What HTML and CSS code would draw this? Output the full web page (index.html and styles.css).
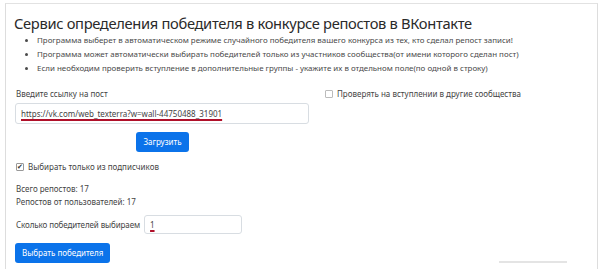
FILE: index.html
```html
<!DOCTYPE html>
<html>
<head>
<meta charset="utf-8">
<link rel="stylesheet" href="styles.css">
</head>
<body>
<div class="frame">
  <h1 class="title">Сервис определения победителя в конкурсе репостов в ВКонтакте</h1>
  <ul class="notes">
    <li>Программа выберет в автоматическом режиме случайного победителя вашего конкурса из тех, кто сделал репост записи!</li>
    <li>Программа может автоматически выбирать победителей только из участников сообщества(от имени которого сделан пост)</li>
    <li>Если необходим проверить вступление в дополнительные группы - укажите их в отдельном поле(по одной в строку)</li>
  </ul>
  <div class="row">
    <div class="col-left">
      <div class="label">Введите ссылку на пост</div>
      <div class="input wide"><span class="u">https://vk.com/web_texterra?w=wall-44750488_31901</span></div>
      <div class="center"><span class="btn">Загрузить</span></div>
    </div>
    <div class="col-right">
      <label class="check"><span class="box"></span>Проверять на вступлении в другие сообщества</label>
    </div>
  </div>
  <label class="check subs"><span class="box checked">✔</span>Выбирать только из подписчиков</label>
  <div class="stats">
    <div>Всего репостов: 17</div>
    <div>Репостов от пользователей: 17</div>
  </div>
  <div class="count">
    <span>Сколько победителей выбираем</span>
    <div class="input small"><span class="u">1</span></div>
  </div>
  <div class="bottom">
    <span class="btn">Выбрать победителя</span>
    <span class="line"></span>
  </div>
</div>
</body>
</html>
```
FILE: styles.css
```css
html, body {
  margin: 0;
  padding: 0;
  background: #fff;
}
body {
  font-family: "Noto Sans", "Open Sans", sans-serif;
  color: #444;
  font-size: 8px;
  padding: 3px 7px 0 5px;
  height: 269px;
  box-sizing: border-box;
  overflow: hidden;
}
.frame {
  border-left: 1px solid #ddd;
  border-top: 1px solid #e2e2e2;
  border-right: 1px solid #ddd;
  height: 270px;
  padding: 0 0 0 9px;
  box-sizing: border-box;
}
.title {
  font-weight: 400;
  font-size: 14.7px;
  color: #2a2a2a;
  margin: 9px 0 0 -1px;
  line-height: 20px;
  letter-spacing: -0.32px;
}
.notes {
  margin: 0;
  padding-left: 22px;
  font-size: 7.95px;
  line-height: 14px;
  color: #4a4a4a;
}
.row {
  display: flex;
  margin-top: 13px;
}
.col-left {
  width: 294px;
}
.col-right {
  padding-left: 16px;
}
.label {
  line-height: 12px;
  margin-left: 1px;
}
.input {
  border: 1px solid #d8dde2;
  border-radius: 3px;
  box-sizing: border-box;
  background: #fff;
  font-size: 8px;
  color: #444;
  display: flex;
  align-items: center;
}
.wide {
  width: 294px;
  height: 21px;
  margin-top: 3px;
  padding-left: 5px;
}
.u {
  text-decoration: underline;
  text-decoration-color: #b0102a;
  text-decoration-thickness: 2px;
  text-underline-offset: 2px;
}
.center {
  display: flex;
  justify-content: center;
  margin-top: 8px;
  padding-left: 1px;
}
.btn {
  display: inline-block;
  background: #0b73ea;
  color: #fff;
  border-radius: 3px;
  font-size: 8px;
  line-height: 20px;
  padding: 0 7px;
}
.check {
  display: flex;
  align-items: center;
  line-height: 12px;
}
.box {
  width: 6px;
  height: 6px;
  border: 1px solid #bbb;
  border-radius: 1px;
  margin-right: 4px;
  font-size: 7px;
  line-height: 6px;
  color: #333;
  display: flex;
  align-items: center;
  justify-content: center;
}
.box.checked { border-color: #999; }
.subs {
  margin-top: 9px;
  margin-left: 1px;
}
.stats {
  margin-top: 9px;
  line-height: 13px;
  margin-left: 1px;
}
.count {
  display: flex;
  align-items: center;
  margin-top: 7px;
  margin-left: 1px;
  letter-spacing: -0.1px;
}
.small {
  width: 98px;
  height: 19px;
  margin-left: 4px;
  padding-left: 5px;
}
.bottom {
  display: flex;
  align-items: flex-end;
  margin-top: 9px;
}
.line {
  width: 68px;
  height: 2px;
  background: #e4e4e4;
  margin-left: 389px;
}
```
